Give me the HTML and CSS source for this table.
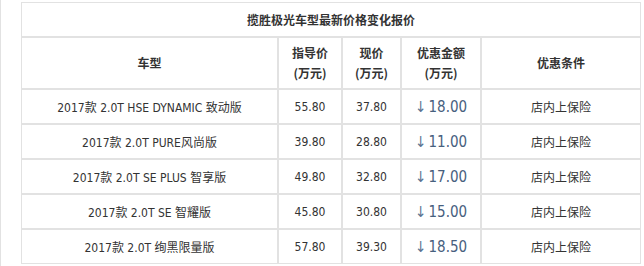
FILE: index.html
```html
<!DOCTYPE html>
<html lang="zh-CN">
<head>
<meta charset="utf-8">
<title>揽胜极光车型最新价格变化报价</title>
<link rel="stylesheet" href="styles.css">
</head>
<body>
<div class="page">
  <table class="price-table">
    <colgroup>
      <col class="c-model">
      <col class="c-guide">
      <col class="c-now">
      <col class="c-off">
      <col class="c-cond">
    </colgroup>
    <tr class="row-title">
      <td colspan="5" class="title">揽胜极光车型最新价格变化报价</td>
    </tr>
    <tr class="row-head">
      <th>车型</th>
      <th>指导价<br>(万元)</th>
      <th>现价<br>(万元)</th>
      <th>优惠金额<br>(万元)</th>
      <th>优惠条件</th>
    </tr>
    <tr class="row-data">
      <td>2017款 2.0T HSE DYNAMIC 致动版</td>
      <td>55.80</td>
      <td>37.80</td>
      <td class="off"><span class="arrow">↓</span> 18.00</td>
      <td class="cond">店内上保险</td>
    </tr>
    <tr class="row-data">
      <td>2017款 2.0T PURE风尚版</td>
      <td>39.80</td>
      <td>28.80</td>
      <td class="off"><span class="arrow">↓</span> 11.00</td>
      <td class="cond">店内上保险</td>
    </tr>
    <tr class="row-data">
      <td>2017款 2.0T SE PLUS 智享版</td>
      <td>49.80</td>
      <td>32.80</td>
      <td class="off"><span class="arrow">↓</span> 17.00</td>
      <td class="cond">店内上保险</td>
    </tr>
    <tr class="row-data">
      <td>2017款 2.0T SE 智耀版</td>
      <td>45.80</td>
      <td>30.80</td>
      <td class="off"><span class="arrow">↓</span> 15.00</td>
      <td class="cond">店内上保险</td>
    </tr>
    <tr class="row-data">
      <td>2017款 2.0T 绚黑限量版</td>
      <td>57.80</td>
      <td>39.30</td>
      <td class="off"><span class="arrow">↓</span> 18.50</td>
      <td class="cond">店内上保险</td>
    </tr>
  </table>
</div>
</body>
</html>
```
FILE: styles.css
```css
html, body {
  margin: 0;
  padding: 0;
  background: #ffffff;
}

.page {
  box-sizing: border-box;
  height: 266px;
  border-left: 1px solid #e2e2e2;
  padding: 2px 0 0 20px;
  font-family: "DejaVu Sans Condensed", "DejaVu Sans", "Noto Sans CJK SC", sans-serif;
  font-stretch: condensed;
  font-size: 12px;
  color: #333333;
}

.price-table {
  table-layout: fixed;
  width: 620px;
  border-collapse: separate;
  border-spacing: 0;
}

.c-model { width: 257px; }
.c-guide { width: 64px; }
.c-now { width: 59px; }
.c-off { width: 80px; }
.c-cond { width: 160px; }

.price-table td,
.price-table th {
  border: 1px solid #e2e2e2;
  padding: 0;
  text-align: center;
  vertical-align: middle;
}

.price-table th {
  font-family: "Noto Sans CJK SC", sans-serif;
  font-weight: bold;
  font-size: 12px;
  line-height: 20px;
  color: #333333;
}

.row-title { height: 35px; }
.row-head { height: 52px; }
.row-data { height: 35px; }

.title {
  font-family: "Noto Sans CJK SC", sans-serif;
  font-weight: bold;
  font-size: 12px;
  color: #333333;
}

.off {
  font-size: 15px;
  word-spacing: -2px;
  color: #47607e;
  padding-bottom: 2px;
}

.arrow {
  color: #5a7391;
}

.cond {
  font-family: "Noto Sans CJK SC", sans-serif;
  font-size: 12px;
}
```
